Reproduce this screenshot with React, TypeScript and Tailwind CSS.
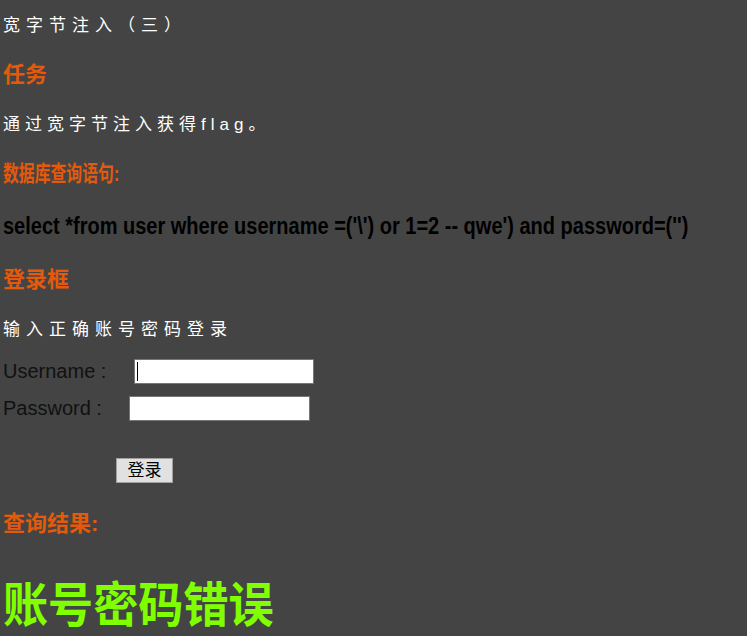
import React from 'react';

// 宽字节注入（三）页面
const font = "font-['Liberation_Sans','Noto_Sans_CJK_SC',sans-serif]";

const Heading: React.FC<{ children: React.ReactNode; className?: string }> = ({ children, className = '' }) => (
  <h3 className={`text-[22px] leading-[26px] font-bold text-[#e35a0c] ${className}`}>{children}</h3>
);

const App: React.FC = () => {
  return (
    <div className={`min-h-[636px] w-full bg-[#444444] pl-[3px] pb-[10px] overflow-hidden ${font}`}>
      <p className="pt-[16px] text-[17px] leading-[19px] tracking-[6px] text-white">宽字节注入（三）</p>

      <Heading className="mt-[27px]">任务</Heading>
      <p className="mt-[27px] text-[17px] leading-[19px] tracking-[5px] text-white">通过宽字节注入获得flag。</p>

      <Heading className="mt-[27px] origin-left scale-x-[0.72] whitespace-nowrap">数据库查询语句:</Heading>
      <p className="mt-[25px] text-[24px] leading-[28px] font-bold text-black whitespace-nowrap origin-left scale-x-[0.833]">
        select *from user where username =('\') or 1=2 -- qwe') and password=('')
      </p>

      <Heading className="mt-[27px]">登录框</Heading>
      <p className="mt-[27px] text-[17px] leading-[19px] tracking-[6px] text-white">输入正确账号密码登录</p>

      {/* 登录表单 */}
      <form className="text-[20px] text-[#111111]" onSubmit={(e) => e.preventDefault()}>
        <div className="mt-[20px] flex items-center h-[25px]">
          <label className="leading-[25px]">Username :</label>
          <div className="relative ml-[28px]">
            <input
              type="text"
              className="block w-[180px] h-[25px] bg-white border border-[#767676] outline-none caret-transparent text-[16px] px-[2px]"
            />
            <span className="absolute left-[3px] top-[3px] h-[19px] w-px bg-black" />
          </div>
        </div>
        <div className="mt-[12px] flex items-center h-[25px]">
          <label className="leading-[25px]">Password :</label>
          <input
            type="password"
            className="ml-[27px] block w-[181px] h-[25px] bg-white border border-[#767676] outline-none text-[16px] px-[2px]"
          />
        </div>
        <div className="mt-[37px] flex pl-[113px]">
          <button
            type="submit"
            className="w-[57px] h-[25px] bg-[#e1e1e1] border border-[#a0a0a0] text-[17px] leading-[20px] text-black"
          >
            登录
          </button>
        </div>
      </form>

      <Heading className="mt-[28px]">查询结果:</Heading>
      <p className="mt-[41px] text-[48px] leading-[56px] font-bold text-[#7fff00] whitespace-nowrap origin-left scale-x-[0.94]">
        账号密码错误
      </p>
    </div>
  );
};

export default App;
